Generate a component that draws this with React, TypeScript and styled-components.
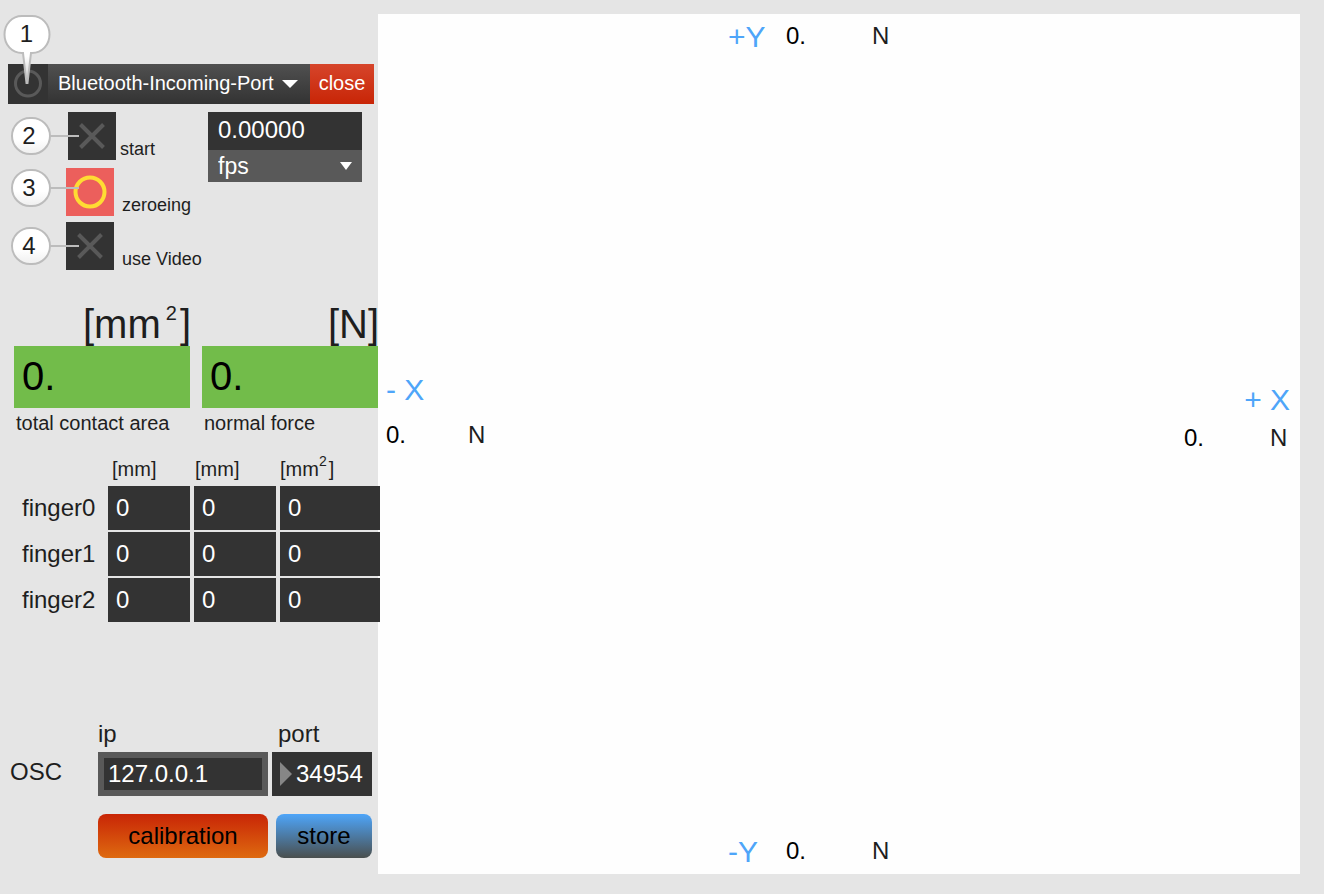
import React, { useState } from 'react';
import styled, { createGlobalStyle } from 'styled-components';

const color = {
  page: '#e5e5e5',
  dark: '#333333',
  mid: '#595959',
  text: '#1e1e1e',
  light: '#ffffff',
  green: '#72bc4a',
  axis: '#4ea5f9',
  outline: '#bcbcbc',
};

const GlobalStyle = createGlobalStyle`
  * { box-sizing: border-box; }
  body {
    margin: 0;
    background: ${color.page};
    color: ${color.text};
    font-family: "Liberation Sans", Arial, sans-serif;
    font-size: 24px;
  }
  button, input, select { font-family: inherit; margin: 0; border: 0; border-radius: 0; }
`;

const Page = styled.div`
  display: grid;
  grid-template-columns: 378px 1fr;
  min-height: 100vh;
  padding: 14px 24px 20px 0;
`;

const Sidebar = styled.aside`
  position: relative;
  z-index: 1;
  display: flex;
  flex-direction: column;
  padding: 50px 0 16px;
`;

/* Port bar */

const PortBar = styled.div`
  position: relative;
  display: flex;
  height: 40px;
  margin: 0 4px 0 8px;
`;

const PowerButton = styled.button`
  width: 40px;
  padding: 0;
  background: ${color.dark};
  svg { display: block; }
`;

const SelectWrap = styled.div<{ $arrowRight: number }>`
  position: relative;
  display: flex;
  flex: 1;
  svg {
    position: absolute;
    right: ${p => p.$arrowRight}px;
    top: 50%;
    transform: translateY(-50%);
    pointer-events: none;
  }
`;

const PortSelect = styled.select`
  appearance: none;
  flex: 1;
  padding: 0 0 2px 10px;
  background: linear-gradient(#505050, #333333);
  color: ${color.light};
  font-size: 20px;
`;

const CloseButton = styled.button`
  width: 64px;
  padding: 0 0 2px;
  background: linear-gradient(#d6452b, #c82506);
  color: ${color.light};
  font-size: 20px;
`;

/* Numbered callouts */

const CalloutBubble = styled.span`
  position: absolute;
  left: -8px;
  top: -50px;
  width: 56px;
  height: 72px;
  pointer-events: none;
  svg { position: absolute; left: 0; top: 0; }
`;

const CalloutNumber = styled.span`
  position: absolute;
  left: 0;
  top: 0;
  width: 53px;
  line-height: 40px;
  text-align: center;
`;

const Callout = styled.span<{ $top: number }>`
  position: absolute;
  left: 11px;
  top: ${p => p.$top}px;
  width: 40px;
  height: 38px;
  border: 2px solid ${color.outline};
  border-radius: 19px;
  background: linear-gradient(#ffffff 60%, #f0f0f0);
  line-height: 34px;
  padding-right: 4px;
  text-align: center;
  pointer-events: none;
  &::after {
    content: '';
    position: absolute;
    left: 37px;
    top: 16px;
    width: 29px;
    height: 2px;
    background: ${color.outline};
  }
`;

/* Toggles and frame rate */

const ControlArea = styled.div`
  display: flex;
  align-items: flex-start;
  margin-top: 8px;
`;

const ToggleList = styled.div`
  display: flex;
  flex-direction: column;
  gap: 6px;
  width: 208px;
`;

const ToggleRow = styled.div<{ $indent: number; $gap: number }>`
  position: relative;
  display: flex;
  align-items: flex-end;
  gap: ${p => p.$gap}px;
  padding-left: ${p => p.$indent}px;
  &:first-child { margin-bottom: 2px; }
`;

const ToggleLabel = styled.label`
  font-size: 18px;
  line-height: 22px;
`;

const ToggleBox = styled.span`
  display: grid;
  input, svg { grid-area: 1 / 1; }
  svg { pointer-events: none; }
`;

const ToggleInput = styled.input`
  appearance: none;
  width: 48px;
  height: 48px;
  background: ${color.dark};
`;

const BangButton = styled.button`
  width: 48px;
  height: 48px;
  padding: 0;
  background: #ec5f5c;
  svg { display: block; }
`;

const RatePanel = styled.div`
  display: flex;
  flex-direction: column;
  width: 154px;
`;

const RateValue = styled.output`
  height: 38px;
  padding-left: 10px;
  background: ${color.dark};
  color: ${color.light};
  line-height: 36px;
`;

const RateSelect = styled.select`
  appearance: none;
  flex: 1;
  height: 32px;
  padding: 0 0 0 10px;
  background: ${color.mid};
  color: ${color.light};
  font-size: 23px;
`;

/* Totals */

const Totals = styled.div`
  display: grid;
  grid-template-columns: 1fr 1fr;
  gap: 12px;
  margin: 36px 0 0 14px;
`;

const Total = styled.div`
  display: flex;
  flex-direction: column;
`;

const TotalUnit = styled.span`
  height: 40px;
  margin-right: -1px;
  font-size: 40px;
  line-height: 36px;
  text-align: right;
  white-space: nowrap;
`;

const Sup = styled.sup<{ $size: number; $raise: number; $before: number; $after: number }>`
  padding: 0 ${p => p.$after}px 0 ${p => p.$before}px;
  font-size: ${p => p.$size}px;
  line-height: 0;
  vertical-align: ${p => p.$raise}px;
`;

const TotalValue = styled.output`
  height: 62px;
  padding-left: 8px;
  background: ${color.green};
  color: #000000;
  font-size: 40px;
  line-height: 60px;
`;

const TotalLabel = styled.span`
  margin: 3px 0 0 2px;
  font-size: 20px;
  line-height: 24px;
`;

/* Finger table */

const FingerTable = styled.table`
  table-layout: fixed;
  width: 366px;
  margin: 21px 0 0 18px;
  border-spacing: 4px 2px;
  font-size: 24px;
  th, td { padding: 0; text-align: left; font-weight: normal; }
`;

const UnitHead = styled.th<{ $width: number; $inset: number }>`
  width: ${p => p.$width}px;
  height: 26px;
  font-size: 20px;
  line-height: 22px;
  vertical-align: top;
  white-space: nowrap;
  && { padding-left: ${p => p.$inset}px; }
`;

const FingerCell = styled.td`
  height: 44px;
  background: ${color.dark};
  color: ${color.light};
  && { padding-left: 8px; }
`;

/* OSC settings */

const OscForm = styled.form`
  margin: auto 6px 0 10px;
`;

const OscFields = styled.div`
  display: grid;
  grid-template-columns: 88px 1fr 100px;
  align-items: end;
`;

const OscTitle = styled.span`
  line-height: 48px;
`;

const Field = styled.div`
  display: flex;
  flex-direction: column;
  gap: 4px;
  margin-right: 4px;
  &:last-child { margin-right: 0; }
`;

const FieldLabel = styled.label<{ $inset: number }>`
  padding-left: ${p => p.$inset}px;
  line-height: 28px;
`;

const IpInput = styled.input`
  width: 100%;
  height: 44px;
  padding: 0 0 0 4px;
  background: ${color.dark};
  color: ${color.light};
  font-size: 24px;
  && { border: 6px solid ${color.mid}; }
`;

const PortBox = styled.div`
  display: flex;
  align-items: center;
  gap: 4px;
  height: 44px;
  padding-left: 8px;
  background: ${color.dark};
  svg { flex: none; }
`;

const PortInput = styled.input`
  width: 100%;
  height: 44px;
  padding: 0;
  background: transparent;
  color: ${color.light};
  font-size: 24px;
`;

const OscActions = styled.div`
  display: grid;
  grid-template-columns: 1fr 96px;
  gap: 8px;
  margin: 18px 0 0 88px;
`;

const ActionButton = styled.button<{ $from: string; $to: string }>`
  height: 44px;
  padding: 0;
  background: linear-gradient(${p => p.$from}, ${p => p.$to});
  color: #000000;
  font-size: 24px;
  && { border-radius: 8px; }
`;

/* Force plot */

const Plot = styled.main`
  display: flex;
  flex-direction: column;
  justify-content: space-between;
  padding: 4px 0 5px;
  background: #fefefe;
  line-height: 36px;
`;

const VerticalAxis = styled.div`
  display: flex;
  align-self: center;
  width: 222px;
`;

const HorizontalAxes = styled.div`
  display: flex;
  justify-content: space-between;
  align-items: flex-start;
  padding: 0 10px 60px 8px;
`;

const SideAxis = styled.div<{ $gap: number; $top: number; $align: string }>`
  display: flex;
  flex-direction: column;
  gap: ${p => p.$gap}px;
  width: 106px;
  padding-top: ${p => p.$top}px;
  text-align: ${p => p.$align};
`;

const AxisName = styled.span`
  min-width: 58px;
  padding-top: 1px;
  color: ${color.axis};
  font-size: 30px;
  line-height: 35px;
`;

const Reading = styled.div<{ $width: number }>`
  display: grid;
  grid-template-columns: ${p => p.$width}px auto;
  justify-content: start;
  text-align: left;
  output { color: #000000; }
`;

const CrossIcon = () => (
  <svg width="48" height="48" viewBox="0 0 48 48" fill="none" stroke={color.mid} strokeWidth="4">
    <path d="M12.500 12.500L35.500 35.500M35.500 12.500L12.500 35.500" />
  </svg>
);

const DownArrow = ({ width }: { width: number }) => (
  <svg width={width} height="8" viewBox="0 0 16 8" preserveAspectRatio="none">
    <path d="M0 0H16L8 8Z" fill="#fff" />
  </svg>
);

type ToggleProps = { id: string; label: string; number: number; indent: number; gap: number };

const Toggle = ({ id, label, number, indent, gap }: ToggleProps) => (
  <ToggleRow $indent={indent} $gap={gap}>
    <ToggleBox>
      <ToggleInput id={id} type="checkbox" />
      <CrossIcon />
    </ToggleBox>
    <Callout $top={5}>{number}</Callout>
    <ToggleLabel htmlFor={id}>{label}</ToggleLabel>
  </ToggleRow>
);

const fingers = [
  { name: 'finger0', values: [0, 0, 0] },
  { name: 'finger1', values: [0, 0, 0] },
  { name: 'finger2', values: [0, 0, 0] },
];

export default function App() {
  const [ip, setIp] = useState('127.0.0.1');
  const [port, setPort] = useState('34954');

  return (
    <>
      <GlobalStyle />
      <Page>
        <Sidebar>
          <PortBar>
            <PowerButton type="button" aria-label="Power">
              <svg width="40" height="40" viewBox="0 0 40 40" fill="none">
                <circle cx="20" cy="19.5" r="12.5" stroke={color.mid} strokeWidth="3" />
              </svg>
            </PowerButton>
            <SelectWrap $arrowRight={12}>
              <PortSelect aria-label="Serial port">
                <option>Bluetooth-Incoming-Port</option>
              </PortSelect>
              <DownArrow width={16} />
            </SelectWrap>
            <CloseButton type="button">close</CloseButton>
            <CalloutBubble>
              <svg width="56" height="72" viewBox="0 0 56 72">
                <defs>
                  <linearGradient id="tail" x1="0" y1="0" x2="0" y2="1">
                    <stop offset="0.6" stopColor="#fff" />
                    <stop offset="1" stopColor="#c8c8c8" />
                  </linearGradient>
                </defs>
                <path
                  d="M22 2H32C42 2 49.5 10 49.5 20.500C49.500 31 42 39 32 39H31L27.500 69H26.500L23 39H22C12 39 4.500 31 4.500 20.500C4.500 10 12 2 22 2Z"
                  fill="url(#tail)"
                  stroke={color.outline}
                  strokeWidth="2"
                />
              </svg>
              <CalloutNumber>1</CalloutNumber>
            </CalloutBubble>
          </PortBar>

          <ControlArea>
            <ToggleList>
              <Toggle id="start" label="start" number={2} indent={68} gap={4} />
              <ToggleRow $indent={66} $gap={8}>
                <BangButton id="zeroeing" type="button">
                  <svg width="48" height="48" viewBox="0 0 48 48" fill="none">
                    <circle cx="24" cy="24" r="14.5" stroke="#ffdc33" strokeWidth="4" />
                  </svg>
                </BangButton>
                <Callout $top={1}>3</Callout>
                <ToggleLabel htmlFor="zeroeing">zeroeing</ToggleLabel>
              </ToggleRow>
              <Toggle id="video" label="use Video" number={4} indent={66} gap={8} />
            </ToggleList>
            <RatePanel>
              <RateValue>0.00000</RateValue>
              <SelectWrap $arrowRight={10}>
                <RateSelect aria-label="Rate unit">
                  <option>fps</option>
                </RateSelect>
                <DownArrow width={12} />
              </SelectWrap>
            </RatePanel>
          </ControlArea>

          <Totals>
            <Total>
              <TotalUnit>
                [mm<Sup $size={20} $raise={18} $before={5} $after={3}>2</Sup>]
              </TotalUnit>
              <TotalValue>0.</TotalValue>
              <TotalLabel>total contact area</TotalLabel>
            </Total>
            <Total>
              <TotalUnit>[N]</TotalUnit>
              <TotalValue>0.</TotalValue>
              <TotalLabel>normal force</TotalLabel>
            </Total>
          </Totals>

          <FingerTable>
            <thead>
              <tr>
                <UnitHead as="td" $width={82} $inset={0} />
                <UnitHead scope="col" $width={82} $inset={4}>[mm]</UnitHead>
                <UnitHead scope="col" $width={82} $inset={1}>[mm]</UnitHead>
                <UnitHead scope="col" $width={100} $inset={0}>
                  [mm<Sup $size={14} $raise={10} $before={0} $after={2}>2</Sup>]
                </UnitHead>
              </tr>
            </thead>
            <tbody>
              {fingers.map(finger => (
                <tr key={finger.name}>
                  <th scope="row">{finger.name}</th>
                  {finger.values.map((value, i) => (
                    <FingerCell key={i}>{value}</FingerCell>
                  ))}
                </tr>
              ))}
            </tbody>
          </FingerTable>

          <OscForm onSubmit={e => e.preventDefault()}>
            <OscFields>
              <OscTitle>OSC</OscTitle>
              <Field>
                <FieldLabel htmlFor="ip" $inset={0}>ip</FieldLabel>
                <IpInput id="ip" value={ip} onChange={e => setIp(e.target.value)} />
              </Field>
              <Field>
                <FieldLabel htmlFor="port" $inset={6}>port</FieldLabel>
                <PortBox>
                  <svg width="12" height="24" viewBox="0 0 12 24">
                    <path d="M0 0L12 12L0 24Z" fill="#868686" />
                  </svg>
                  <PortInput id="port" value={port} onChange={e => setPort(e.target.value)} />
                </PortBox>
              </Field>
            </OscFields>
            <OscActions>
              <ActionButton type="button" $from="#c82506" $to="#de6a10">calibration</ActionButton>
              <ActionButton type="submit" $from="#4ea5f9" $to="#4a4f4e">store</ActionButton>
            </OscActions>
          </OscForm>
        </Sidebar>

        <Plot>
          <VerticalAxis>
            <AxisName>+Y</AxisName>
            <Reading $width={86}><output>0.</output><span>N</span></Reading>
          </VerticalAxis>
          <HorizontalAxes>
            <SideAxis $gap={10} $top={0} $align="left">
              <AxisName>- X</AxisName>
              <Reading $width={82}><output>0.</output><span>N</span></Reading>
            </SideAxis>
            <SideAxis $gap={3} $top={10} $align="right">
              <AxisName>+ X</AxisName>
              <Reading $width={86}><output>0.</output><span>N</span></Reading>
            </SideAxis>
          </HorizontalAxes>
          <VerticalAxis>
            <AxisName>-Y</AxisName>
            <Reading $width={86}><output>0.</output><span>N</span></Reading>
          </VerticalAxis>
        </Plot>
      </Page>
    </>
  );
}
